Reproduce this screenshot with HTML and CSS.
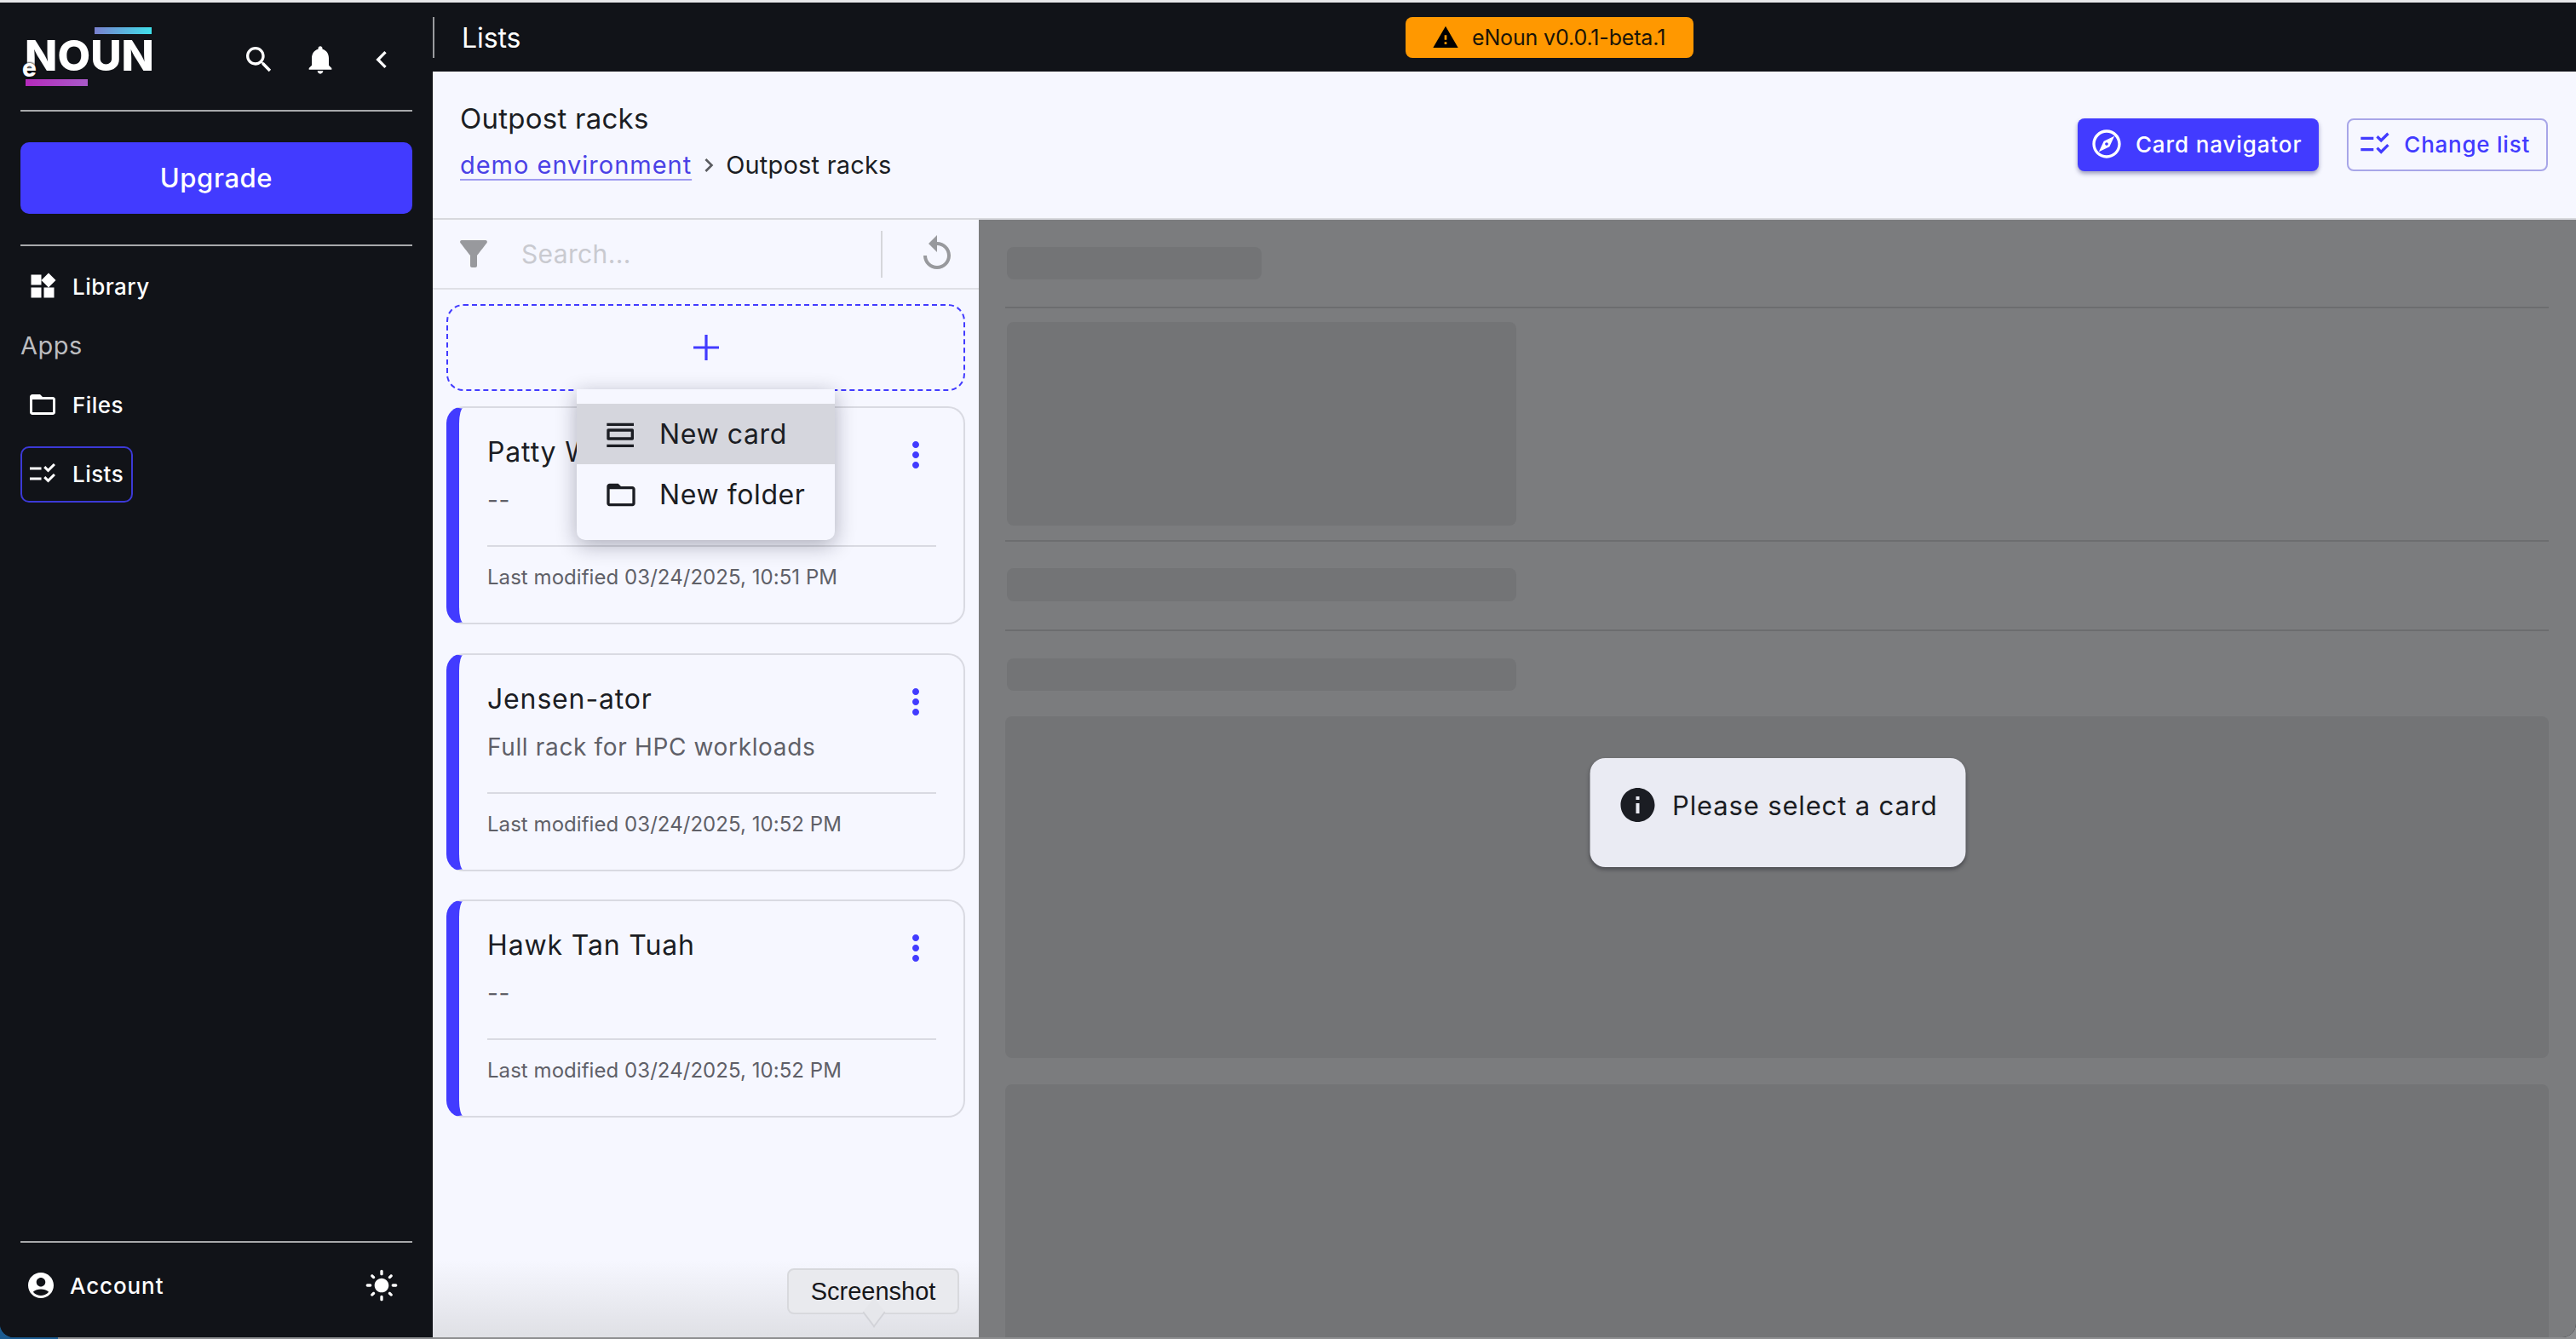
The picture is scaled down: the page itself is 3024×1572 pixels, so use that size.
FILE: index.html
```html
<!DOCTYPE html>
<html lang="en">
<head>
<meta charset="utf-8">
<title>Lists</title>
<link rel="stylesheet" href="styles.css">
</head>
<body>
<svg class="sprite" aria-hidden="true">
  <symbol id="i-search" viewBox="0 0 24 24"><path d="M15.5 14h-.79l-.28-.27C15.41 12.59 16 11.11 16 9.5 16 5.91 13.09 3 9.5 3S3 5.91 3 9.5 5.91 16 9.5 16c1.61 0 3.09-.59 4.23-1.57l.27.28v.79l5 4.99L20.49 19l-4.99-5zm-6 0C7.01 14 5 11.99 5 9.5S7.01 5 9.5 5 14 7.01 14 9.5 11.99 14 9.5 14z"/></symbol>
  <symbol id="i-bell" viewBox="0 0 24 24"><path d="M12 22c1.1 0 2-.9 2-2h-4c0 1.1.89 2 2 2zm6-6v-5c0-3.07-1.64-5.64-4.5-6.32V4c0-.83-.67-1.5-1.5-1.5s-1.5.67-1.5 1.5v.68C7.63 5.36 6 7.92 6 11v5l-2 2v1h16v-1l-2-2z"/></symbol>
  <symbol id="i-left" viewBox="0 0 24 24"><path d="M15.41 7.41 14 6l-6 6 6 6 1.41-1.41L10.83 12z"/></symbol>
  <symbol id="i-right" viewBox="0 0 24 24"><path d="M10 6 8.59 7.41 13.17 12l-4.58 4.59L10 18l6-6z"/></symbol>
  <symbol id="i-widgets" viewBox="0 0 24 24"><path d="M13 13v8h8v-8h-8zM3 21h8v-8H3v8zM3 3v8h8V3H3zm13.66-1.31L11 7.34 16.66 13l5.66-5.66-5.66-5.65z"/></symbol>
  <symbol id="i-folder" viewBox="0 0 24 24"><path d="M20 6h-8l-2-2H4c-1.1 0-1.99.9-1.99 2L2 18c0 1.1.9 2 2 2h16c1.1 0 2-.9 2-2V8c0-1.1-.9-2-2-2zm0 12H4V8h16v10z"/></symbol>
  <symbol id="i-check" viewBox="0 0 24 24"><path d="M11 7H2v2h9V7zm0 8H2v2h9v-2zm5.34-4L12.8 7.46l1.41-1.41 2.12 2.12 4.24-4.24L22 5.34 16.34 11zm0 8-3.54-3.54 1.41-1.41 2.12 2.12 4.24-4.24L22 13.34 16.34 19z"/></symbol>
  <symbol id="i-account" viewBox="0 0 24 24"><path d="M12 2C6.48 2 2 6.48 2 12s4.48 10 10 10 10-4.48 10-10S17.52 2 12 2zm0 4c1.93 0 3.5 1.57 3.5 3.5S13.93 13 12 13s-3.5-1.57-3.5-3.5S10.07 6 12 6zm0 14c-2.03 0-4.43-.82-6.14-2.88C7.55 15.8 9.68 15 12 15s4.45.8 6.14 2.12C16.43 19.18 14.03 20 12 20z"/></symbol>
  <symbol id="i-sun" viewBox="0 0 24 24"><path d="M12 7c-2.76 0-5 2.24-5 5s2.24 5 5 5 5-2.24 5-5-2.24-5-5-5zM2 13h2c.55 0 1-.45 1-1s-.45-1-1-1H2c-.55 0-1 .45-1 1s.45 1 1 1zm18 0h2c.55 0 1-.45 1-1s-.45-1-1-1h-2c-.55 0-1 .45-1 1s.45 1 1 1zM11 2v2c0 .55.45 1 1 1s1-.45 1-1V2c0-.55-.45-1-1-1s-1 .45-1 1zm0 18v2c0 .55.45 1 1 1s1-.45 1-1v-2c0-.55-.45-1-1-1s-1 .45-1 1zM5.99 4.58c-.39-.39-1.03-.39-1.41 0-.39.39-.39 1.03 0 1.41l1.06 1.06c.39.39 1.03.39 1.41 0s.39-1.03 0-1.41L5.99 4.58zm12.37 12.37c-.39-.39-1.03-.39-1.41 0-.39.39-.39 1.03 0 1.41l1.06 1.06c.39.39 1.03.39 1.41 0 .39-.39.39-1.03 0-1.41l-1.06-1.06zm1.06-10.96c.39-.39.39-1.03 0-1.41-.39-.39-1.03-.39-1.41 0l-1.06 1.06c-.39.39-.39 1.03 0 1.41s1.03.39 1.41 0l1.06-1.06zM7.05 18.36c.39-.39.39-1.03 0-1.41-.39-.39-1.03-.39-1.41 0l-1.06 1.06c-.39.39-.39 1.03 0 1.41s1.03.39 1.41 0l1.06-1.06z"/></symbol>
  <symbol id="i-warning" viewBox="0 0 24 24"><path d="M1 21h22L12 2 1 21zm12-3h-2v-2h2v2zm0-4h-2v-4h2v4z"/></symbol>
  <symbol id="i-explore" viewBox="0 0 24 24"><path d="M12 2C6.48 2 2 6.48 2 12s4.48 10 10 10 10-4.48 10-10S17.52 2 12 2zm0 18c-4.41 0-8-3.59-8-8s3.59-8 8-8 8 3.59 8 8-3.59 8-8 8zm-5.5-2.5 7.51-3.49L17.5 6.5 9.99 9.99 6.5 17.5zm5.5-6.6c.61 0 1.1.49 1.1 1.1s-.49 1.1-1.1 1.1-1.1-.49-1.1-1.1.49-1.1 1.1-1.1z"/></symbol>
  <symbol id="i-filter" viewBox="0 0 24 24"><path d="M4.25 5.61C6.27 8.2 10 13 10 13v6c0 .55.45 1 1 1h2c.55 0 1-.45 1-1v-6s3.72-4.8 5.74-7.39c.51-.66.04-1.61-.79-1.61H5.04c-.83 0-1.3.95-.79 1.61z"/></symbol>
  <symbol id="i-replay" viewBox="0 0 24 24"><path d="M12 5V1L7 6l5 5V7c3.31 0 6 2.69 6 6s-2.69 6-6 6-6-2.69-6-6H4c0 4.42 3.58 8 8 8s8-3.58 8-8-3.58-8-8-8z"/></symbol>
  <symbol id="i-plus" viewBox="0 0 30 30"><path d="M13.4 0h3.2v13.4H30v3.2H16.6V30h-3.2V16.6H0v-3.2h13.4z"/></symbol>
  <symbol id="i-more" viewBox="0 0 24 24"><path d="M12 8c1.1 0 2-.9 2-2s-.9-2-2-2-2 .9-2 2 .9 2 2 2zm0 2c-1.1 0-2 .9-2 2s.9 2 2 2 2-.9 2-2-.9-2-2-2zm0 6c-1.1 0-2 .9-2 2s.9 2 2 2 2-.9 2-2-.9-2-2-2z"/></symbol>
  <symbol id="i-card" viewBox="0 0 24 24"><path d="M2 21h19v-2H2v2zM20 8H3c-.55 0-1 .45-1 1v6c0 .55.45 1 1 1h17c.55 0 1-.45 1-1V9c0-.55-.45-1-1-1zM4 14v-4h15v4H4zM2 4v2h19V4H2z"/></symbol>
  <symbol id="i-info" viewBox="0 0 24 24"><path d="M12 2C6.48 2 2 6.48 2 12s4.48 10 10 10 10-4.48 10-10S17.52 2 12 2zm1 15h-2v-6h2v6zm0-8h-2V7h2v2z"/></symbol>
</svg>

<div class="window">
  <aside class="sidebar">
    <div class="side-head">
      <div class="logo">
        <span class="logo-top"></span>
        <span class="logo-word">NOUN</span>
        <span class="logo-e">e</span>
        <span class="logo-bottom"></span>
      </div>
      <div class="side-tools">
        <svg class="ico ico-40"><use href="#i-search"/></svg>
        <svg class="ico ico-40"><use href="#i-bell"/></svg>
        <svg class="ico ico-40"><use href="#i-left"/></svg>
      </div>
    </div>
    <div class="side-rule"></div>
    <div class="upgrade">Upgrade</div>
    <div class="side-rule"></div>
    <nav class="nav">
      <div class="nav-item"><svg class="ico ico-36"><use href="#i-widgets"/></svg><span>Library</span></div>
      <div class="nav-group">Apps</div>
      <div class="nav-item"><svg class="ico ico-36"><use href="#i-folder"/></svg><span>Files</span></div>
      <div class="nav-item nav-active"><svg class="ico ico-36"><use href="#i-check"/></svg><span>Lists</span></div>
    </nav>
    <div class="side-foot">
      <div class="side-rule"></div>
      <div class="foot-row">
        <div class="account"><svg class="ico ico-36"><use href="#i-account"/></svg><span>Account</span></div>
        <svg class="ico ico-40"><use href="#i-sun"/></svg>
      </div>
    </div>
  </aside>

  <div class="main">
    <header class="topbar">
      <div class="topbar-title"><span>Lists</span></div>
      <div class="banner"><svg class="ico ico-32"><use href="#i-warning"/></svg><span>eNoun v0.0.1-beta.1</span></div>
    </header>

    <section class="page-head">
      <div class="crumbs">
        <div class="page-title">Outpost racks</div>
        <div class="breadcrumb">
          <a class="crumb-link">demo environment</a>
          <svg class="ico crumb-sep"><use href="#i-right"/></svg>
          <span class="crumb-current">Outpost racks</span>
        </div>
      </div>
      <div class="head-actions">
        <div class="btn btn-solid"><svg class="ico ico-40"><use href="#i-explore"/></svg><span>Card navigator</span></div>
        <div class="btn btn-outline"><svg class="ico ico-40"><use href="#i-check"/></svg><span>Change list</span></div>
      </div>
    </section>

    <div class="workspace">
      <section class="list-panel">
        <div class="filter-bar">
          <svg class="ico ico-48 filter-ico"><use href="#i-filter"/></svg>
          <div class="search">Search...</div>
          <div class="filter-sep"></div>
          <svg class="ico ico-48 filter-ico"><use href="#i-replay"/></svg>
        </div>
        <div class="cards">
          <div class="add-box"><svg class="ico plus"><use href="#i-plus"/></svg></div>
          <article class="card">
            <div class="card-top"><h3 class="card-title">Patty Wagon</h3><svg class="ico ico-48 more"><use href="#i-more"/></svg></div>
            <p class="card-sub">--</p>
            <div class="card-rule"></div>
            <p class="card-meta">Last modified 03/24/2025, 10:51 PM</p>
          </article>
          <article class="card">
            <div class="card-top"><h3 class="card-title">Jensen-ator</h3><svg class="ico ico-48 more"><use href="#i-more"/></svg></div>
            <p class="card-sub">Full rack for HPC workloads</p>
            <div class="card-rule"></div>
            <p class="card-meta">Last modified 03/24/2025, 10:52 PM</p>
          </article>
          <article class="card">
            <div class="card-top"><h3 class="card-title">Hawk Tan Tuah</h3><svg class="ico ico-48 more"><use href="#i-more"/></svg></div>
            <p class="card-sub">--</p>
            <div class="card-rule"></div>
            <p class="card-meta">Last modified 03/24/2025, 10:52 PM</p>
          </article>
        </div>
        <div class="menu">
          <div class="menu-item menu-hover"><svg class="ico ico-40"><use href="#i-card"/></svg><span>New card</span></div>
          <div class="menu-item"><svg class="ico ico-40"><use href="#i-folder"/></svg><span>New folder</span></div>
        </div>
        <div class="tooltip">Screenshot</div>
      </section>

      <section class="detail">
        <div class="skel skel-title"></div>
        <div class="skel-rule"></div>
        <div class="skel skel-media"></div>
        <div class="skel-rule rule-b"></div>
        <div class="skel skel-line skel-c"></div>
        <div class="skel-rule rule-c"></div>
        <div class="skel skel-line skel-d"></div>
        <div class="skel skel-big"></div>
        <div class="skel skel-rest"></div>
        <div class="notice"><svg class="ico ico-48"><use href="#i-info"/></svg><span>Please select a card</span></div>
      </section>
    </div>
  </div>
</div>
</body>
</html>
```

FILE: styles.css
```css
* { box-sizing: border-box; }
html, body { margin: 0; height: 100%; }
body {
  width: 3024px;
  height: 1572px;
  overflow: hidden;
  font-family: Inter, "Open Sans", sans-serif;
  color: #1b1d23;
  background: linear-gradient(90deg, #1a5a8f 68px, #8d8e90 68px);
}
.sprite { display: none; }
.ico { display: block; flex: none; fill: currentColor; }
.ico-32 { width: 32px; height: 32px; }
.ico-36 { width: 36px; height: 36px; }
.ico-40 { width: 40px; height: 40px; }
.ico-48 { width: 48px; height: 48px; }

.window {
  display: flex;
  height: 1570px;
  border-top: 3px solid #e7e7e9;
  border-radius: 0 0 16px 16px;
  overflow: hidden;
  background: #111318;
}

/* sidebar */
.sidebar {
  flex: none;
  width: 508px;
  padding: 0 24px;
  display: flex;
  flex-direction: column;
  color: #fff;
  background: #111318;
}
.side-head { display: flex; justify-content: space-between; height: 126px; padding: 29px 16px 0 3px; }
.logo { position: relative; width: 154px; display: flex; flex-direction: column; }
.logo-top { width: 67px; height: 8px; margin-left: 84px; background: linear-gradient(90deg, #7a80cf, #3fe0ea); }
.logo-word { height: 53px; margin-left: 2px; font: 800 50px/50px Inter, sans-serif; letter-spacing: .1px; color: #fff; }
.logo-e { position: absolute; left: -1px; top: 34px; font: 800 28px/28px Inter, sans-serif; color: #fff; text-shadow: 0 0 3px #111318, 0 0 2px #111318; }
.logo-bottom { width: 73px; height: 8px; margin-left: 3px; background: linear-gradient(90deg, #b52abc, #a95ac8); }
.side-tools { display: flex; gap: 32px; margin-top: 18px; }
.side-rule { height: 2px; background: #a8a9ab; flex: none; }
.upgrade {
  height: 84px;
  margin: 36px 0;
  padding-bottom: 2px;
  display: flex; align-items: center; justify-content: center;
  border-radius: 10px;
  background: #423bff;
  font-size: 31px; font-weight: 500; letter-spacing: .6px;
}
.nav { padding-top: 14px; display: flex; flex-direction: column; }
.nav-item {
  height: 66px;
  align-self: flex-start;
  display: flex; align-items: center; gap: 17px;
  padding: 0 9px 0 6px;
  border: 2px solid transparent;
  border-radius: 10px;
  font-size: 26px; font-weight: 500; letter-spacing: .45px;
}
.nav-active { margin-top: 16px; padding-bottom: 2px; border-color: #3c39d6; }
.nav-group { height: 73px; padding-top: 1px; line-height: 72px; font-size: 29px; letter-spacing: .5px; color: #bcbdc0; }
.side-foot { margin-top: auto; padding-bottom: 31px; }
.foot-row { height: 60px; margin-top: 20px; padding: 0 16px 0 6px; display: flex; align-items: center; justify-content: space-between; }
.account { display: flex; align-items: center; gap: 16px; font-size: 26px; font-weight: 500; letter-spacing: .9px; }

/* main */
.main { flex: 1; min-width: 0; display: flex; flex-direction: column; }
.topbar {
  flex: none;
  height: 81px;
  padding-top: 1px;
  display: grid;
  grid-template-columns: 1142px max-content;
  justify-content: start;
  align-items: center;
  color: #fff;
  background: #111318;
}
.topbar-title { height: 48px; padding-left: 32px; border-left: 2px solid #9a9b9e; display: flex; align-items: center; font-size: 32px; letter-spacing: -.1px; }
.banner {
  height: 48px;
  padding: 0 33px 0 31px;
  display: flex; align-items: center; gap: 15px;
  border-radius: 8px;
  background: #ff9800;
  color: #1a1408;
  font-size: 25px;
  letter-spacing: -.15px;
}
.banner .ico { color: #000; }

.page-head {
  flex: none;
  height: 174px;
  padding: 0 33px 0 32px;
  display: flex; align-items: center; justify-content: space-between;
  background: #f6f7ff;
  border-bottom: 2px solid #d7d8dd;
}
.crumbs { display: flex; flex-direction: column; padding-bottom: 8px; }
.page-title { margin-top: -2px; font-size: 33px; line-height: 44px; letter-spacing: .25px; }
.breadcrumb { margin-top: 13px; display: flex; align-items: center; font-size: 29px; line-height: 40px; }
.crumb-link { color: #4a41e6; text-decoration: underline; text-decoration-color: #9f9bf0; text-underline-offset: 6px; text-decoration-thickness: 2px; letter-spacing: .98px; }
.crumb-sep { width: 32px; height: 32px; margin: 0 4px 0 4px; color: #5a5b60; }
.crumb-current { letter-spacing: .2px; }
.head-actions { display: flex; gap: 33px; }
.btn {
  height: 62px;
  padding-bottom: 2px;
  display: flex; align-items: center; gap: 14px;
  border-radius: 8px;
  font-size: 26px; font-weight: 500; letter-spacing: .88px;
}
.btn-solid { padding-left: 14px; padding-right: 20px; background: #423bff; color: #fff; box-shadow: 0 3px 5px rgba(50, 50, 110, .45); }
.btn-outline { padding-left: 11px; padding-right: 19px; border: 2px solid #a8a6e8; color: #423bff; letter-spacing: .75px; }

.workspace { flex: 1; min-height: 0; display: flex; }

/* list */
.list-panel {
  position: relative;
  flex: none;
  width: 641px;
  display: flex;
  flex-direction: column;
  background: linear-gradient(#f6f7ff calc(100% - 90px), #dfe0e5);
}
.filter-bar {
  flex: none;
  height: 82px;
  padding: 1px 25px 1px 24px;
  display: flex; align-items: center;
  border-bottom: 2px solid #dfe0e6;
}
.filter-ico { color: #98999d; }
.search { flex: 1; margin-left: 32px; font-size: 30px; letter-spacing: .35px; color: #c9cad0; }
.filter-sep { width: 2px; height: 55px; margin-right: 40px; background: #d5d6db; }
.cards { padding: 17px 16px 0; display: flex; flex-direction: column; gap: 18px; }
.cards .card + .card { margin-top: 15.5px; }
.add-box {
  height: 102px;
  display: flex; align-items: center; justify-content: center;
  border: 2px dashed #423bff;
  border-radius: 20px;
}
.plus { width: 30px; height: 30px; color: #423bff; }
.card {
  height: 256px;
  padding: 31px 32px 0 33px;
  border: 2px solid #d9dae2;
  border-left: 15px solid #423bff;
  border-radius: 20px;
}
.card-top { height: 48px; display: flex; justify-content: space-between; }
.card-title { margin: -3px 0 0; font-size: 32px; font-weight: 400; line-height: 48px; letter-spacing: .85px; white-space: nowrap; }
.more { color: #423bff; }
.card-sub { margin: 9px 0 0; font-size: 28px; line-height: 40px; letter-spacing: .65px; color: #5f6068; }
.card-rule { height: 2px; margin-top: 33px; background: #d9dae2; }
.card-meta { margin: 20px 0 0; font-size: 24px; line-height: 32px; letter-spacing: .05px; color: #5f6068; }

.menu {
  position: absolute;
  left: 169px; top: 199px;
  width: 303px;
  padding: 17px 0 18px;
  border-radius: 0 0 10px 10px;
  background: #f6f7ff;
  box-shadow: 0 6px 24px rgba(20, 20, 40, .32);
}
.menu-item { height: 71px; padding-left: 32px; display: flex; align-items: center; gap: 25px; font-size: 32px; letter-spacing: .6px; }
.menu-hover { background: #d5d6dd; }

.tooltip {
  position: absolute;
  left: 416px; top: 1231px;
  width: 202px; height: 54px;
  display: flex; align-items: center; justify-content: center;
  border: 2px solid #d8d9dd;
  border-radius: 8px;
  background: #e9eaee;
  font: 29px "Liberation Sans", Arial, sans-serif;
  color: #16171a;
}
.tooltip::after {
  content: "";
  position: absolute;
  left: 89px; bottom: -11px;
  width: 20px; height: 20px;
  background: #e6e7eb;
  border-right: 2px solid #d2d3d8;
  border-bottom: 2px solid #d2d3d8;
  transform: rotate(45deg) skew(8deg, 8deg);
}

/* detail */
.detail {
  position: relative;
  flex: 1;
  min-width: 0;
  padding: 32px 32px 0 33px;
  display: flex;
  flex-direction: column;
  background: #7b7c7e;
  overflow: hidden;
}
.skel { flex: none; border-radius: 8px; background: #737476; }
.skel-title { width: 299px; height: 38px; }
.skel-rule { flex: none; height: 2px; margin: 32px 0 16px -2px; background: #6c6d6f; }
.skel-media { width: 598px; height: 239px; }
.rule-b { margin-top: 17px; margin-bottom: 31px; }
.skel-line { width: 598px; height: 39px; }
.rule-c { margin-top: 33px; margin-bottom: 32px; }
.skel-d { height: 38px; }
.skel-big { height: 401px; margin: 30px 0 0 -2px; }
.skel-rest { height: 320px; margin: 31px 0 0 -2px; }
.notice {
  position: absolute;
  left: 50%; top: 632px;
  transform: translateX(-50%);
  width: 441px; height: 128px;
  padding: 0 0 18px 32px;
  display: flex; align-items: center; gap: 17px;
  border-radius: 18px;
  background: #eaebf3;
  box-shadow: 0 3px 4px rgba(30, 30, 40, .45);
  font-size: 31px;
  letter-spacing: .85px;
  color: #1b1d23;
}
```
